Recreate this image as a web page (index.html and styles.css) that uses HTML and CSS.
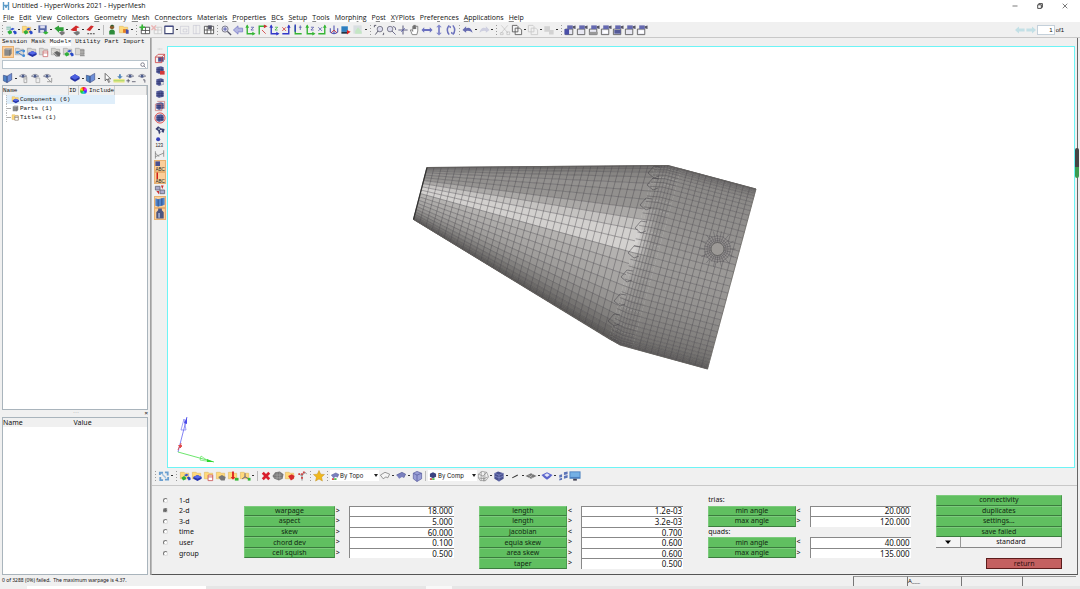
FILE: index.html
```html
<!DOCTYPE html>
<html lang="en">
<head>
<meta charset="utf-8">
<title>Untitled - HyperWorks 2021 - HyperMesh</title>
<link rel="stylesheet" href="styles.css">
</head>
<body>
<div class="app">
  <header class="titlebar">
    <svg class="logo" viewBox="0 0 8 8" aria-hidden="true"><path d="M1.5 0v8M6.5 0v8M1.5 3.5h5M3 5h2" stroke="#5b9bc8" stroke-width="1.4" fill="none"/></svg>
    <h1>Untitled - HyperWorks 2021 - HyperMesh</h1>
    <div class="winctl">
      <button aria-label="Minimize"><svg viewBox="0 0 6 6"><path d="M.5 3h5" stroke="#444" stroke-width=".7"/></svg></button>
      <button aria-label="Restore"><svg viewBox="0 0 6 6"><path d="M.7 1.8h3.6v3.6H.7zM1.8 1.6V.6h3.6v3.7h-1" stroke="#222" stroke-width=".8" fill="none"/></svg></button>
      <button aria-label="Close"><svg viewBox="0 0 6 6"><path d="M.7.7l4.6 4.6M5.3.7L.7 5.3" stroke="#444" stroke-width=".7"/></svg></button>
    </div>
  </header>
  <nav class="menubar">
    <a href="#"><u>F</u>ile</a><a href="#"><u>E</u>dit</a><a href="#"><u>V</u>iew</a><a href="#"><u>C</u>ollectors</a><a href="#"><u>G</u>eometry</a><a href="#"><u>M</u>esh</a><a href="#">Co<u>n</u>nectors</a><a href="#">Materia<u>l</u>s</a><a href="#"><u>P</u>roperties</a><a href="#"><u>B</u>Cs</a><a href="#"><u>S</u>etup</a><a href="#"><u>T</u>ools</a><a href="#">Morph<u>i</u>ng</a><a href="#">P<u>o</u>st</a><a href="#"><u>X</u>YPlots</a><a href="#">Prefe<u>r</u>ences</a><a href="#"><u>A</u>pplications</a><a href="#"><u>H</u>elp</a>
  </nav>
  <div class="toolbar">
    <div class="tools" data-tools="| new v open v save v import v export v run v ; user folderblock v | addpage delpage window v pageoff pageoff2 pagegrid | zoomin left axg axr axb axb2 axb3 axg axg2 iso photo photo2 v | fitmag rotmag cross hand arrh arrv rot | undo v redo v | cut copy v paste v paste2 v | pg1 pg2 pg3 pg4 pg5 pg2 pg4"></div>
    <div class="pager">
      <button aria-label="Previous page"><svg viewBox="0 0 10 8"><path d="M0 4l4-3.6v2h5.6v3.2H4v2z" fill="#c3e0e6"/></svg></button>
      <button aria-label="Next page"><svg viewBox="0 0 10 8"><path d="M10 4L6 .4v2H.4v3.2H6v2z" fill="#c3e0e6"/></svg></button>
      <input id="page" value="1"><label for="page">of1</label>
    </div>
  </div>
  <main class="main">
    <aside class="side">
      <nav class="tabs"><a href="#">Session</a><a href="#">Mask</a><a href="#" class="on">Model<span>×</span></a><a href="#">Utility</a><a href="#">Part</a><a href="#">Import</a></nav>
      <div class="tools" data-tools="cube! fshare fcomp fprop fmat fmulti ffile"></div>
      <div class="search"><input aria-label="Search"><svg viewBox="0 0 6 6" aria-hidden="true"><circle cx="2.6" cy="2.6" r="1.8"/><path d="M4 4l1.6 1.6"/></svg></div>
      <div class="row">
        <div class="tools" data-tools="panel v eye1 eye2 eye3"></div>
        <div class="tools" data-tools="comp v panel v cursor addmesh eyepm eye4"></div>
      </div>
      <div class="tree">
        <div class="treehead"><span>Name</span><span>ID</span><span class="wheel"></span><span>Include</span><span></span></div>
        <ul>
          <li class="sel"><i data-icon="fcompy"></i>Components&nbsp;(6)</li>
          <li><i data-icon="cube"></i>Parts&nbsp;(1)</li>
          <li><i data-icon="fprop2"></i>Titles&nbsp;(1)</li>
        </ul>
      </div>
      <div class="splitter"><span>···</span><b>×</b></div>
      <div class="props"><table><thead><tr><th>Name</th><th>Value</th></tr></thead></table></div>
    </aside>
    <section class="work">
      <div class="stage">
        <div class="vtools" data-tools="vh vb1 vb2 vb3 vb4 vb5 vb6 vb7 v123 vb8 abc1! abc2! abc3 vb9! vb10!"></div>
        <div class="view"><svg id="model" viewBox="168 47 906 420" preserveAspectRatio="xMidYMid meet" role="img" aria-label="Meshed cone model"></svg></div>
        <div class="marker"></div>
      </div>
      <div class="toolbar lower">
        <div class="tools" data-tools="| cycle v | ymulti ycomp yprop ymat yload ysys v ; redx blob yred fork | star |"></div>
        <div class="combo"><i data-icon="topo"></i><select aria-label="Geometry colour"><option>By Topo</option></select></div>
        <div class="tools" data-tools="shape v shape2 v bcube ;"></div>
        <div class="combo"><i data-icon="compc"></i><select aria-label="Element colour"><option>By Comp</option></select></div>
        <div class="tools" data-tools="wire v solid v line v diam v comp2 v shards screen"></div>
      </div>
      <form class="panel">
        <div class="modes">
          <label><input type="radio" name="m">1-d</label><label><input type="radio" name="m" checked>2-d</label><label><input type="radio" name="m">3-d</label><label><input type="radio" name="m">time</label><label><input type="radio" name="m">user</label><label><input type="radio" name="m">group</label>
        </div>
        <div class="checks">
          <p></p><p></p><p></p>
          <button type="button">warpage</button><span>&gt;</span><input aria-label="warpage" value="18.000">
          <button type="button">aspect</button><span>&gt;</span><input aria-label="aspect" value="5.000">
          <button type="button">skew</button><span>&gt;</span><input aria-label="skew" value="60.000">
          <button type="button">chord dev</button><span>&gt;</span><input aria-label="chord dev" value="0.100">
          <button type="button">cell squish</button><span>&gt;</span><input aria-label="cell squish" value="0.500">
        </div>
        <div class="checks">
          <p></p><p></p><p></p>
          <button type="button">length</button><span>&lt;</span><input aria-label="minimum length" value="1.2e-03">
          <button type="button">length</button><span>&gt;</span><input aria-label="maximum length" value="3.2e-03">
          <button type="button">jacobian</button><span>&lt;</span><input aria-label="jacobian" value="0.700">
          <button type="button">equia skew</button><span>&gt;</span><input aria-label="equia skew" value="0.600">
          <button type="button">area skew</button><span>&gt;</span><input aria-label="area skew" value="0.600">
          <button type="button">taper</button><span>&gt;</span><input aria-label="taper" value="0.500">
        </div>
        <div class="checks">
          <p>trias:</p><p></p><p></p>
          <button type="button">min angle</button><span>&lt;</span><input aria-label="tria min angle" value="20.000">
          <button type="button">max angle</button><span>&gt;</span><input aria-label="tria max angle" value="120.000">
          <p>quads:</p><p></p><p></p>
          <button type="button">min angle</button><span>&lt;</span><input aria-label="quad min angle" value="40.000">
          <button type="button">max angle</button><span>&gt;</span><input aria-label="quad max angle" value="135.000">
        </div>
        <div class="actions">
          <button type="button">connectivity</button><button type="button">duplicates</button><button type="button">settings...</button><button type="button">save failed</button>
          <div class="standard"><button type="button" aria-label="Choose"><svg viewBox="0 0 6 4"><path d="M0 .5h6L3 4z"/></svg></button><button type="button">standard</button></div>
          <button type="button" class="return">return</button>
        </div>
      </form>
    </section>
  </main>
  <footer class="status"><span class="msg">0 of 3288 (0%) failed.&nbsp; The maximum warpage is 4.37.</span><span class="f1"></span><span class="f1">A___</span><span class="f2"></span><span class="f1"></span></footer>
  <div class="strip"></div>
</div>
<script src="app.js"></script>
</body>
</html>
```
FILE: styles.css
```css
* { box-sizing: border-box; }
body { margin: 0; background: #fff; color: #111; font: 7px/10px "Noto Sans", "Open Sans", sans-serif; }
button, input, select { font: inherit; color: inherit; margin: 0; padding: 0; border: 0; background: none; border-radius: 0; min-width: 0; }
a { color: inherit; text-decoration: none; }
p { margin: 0; }
svg { display: block; }
.app { min-height: 100vh; display: flex; flex-direction: column; }

.titlebar { display: flex; align-items: center; height: 12px; padding: 0 11px 0 2px; }
.logo { width: 8px; height: 8px; margin-right: 2px; }
.titlebar h1 { margin: 0; font: 400 7px/10px "Open Sans", sans-serif; flex: 1; }
.winctl { display: flex; gap: 18px; }
.winctl svg { width: 6px; height: 6px; }
.winctl button { width: 7px; }
.menubar { display: flex; gap: 5px; height: 10px; padding-left: 3px; font-family: "Open Sans", sans-serif; line-height: 11px; }
.menubar u { text-underline-offset: 1px; text-decoration-thickness: 1px; text-decoration-color: #888; }

.toolbar { display: flex; align-items: center; height: 16px; background: #f0f0f0; border-bottom: 1px solid #c8c8c8; }
.tools { display: flex; align-items: center; }
.tb { width: 12px; height: 12px; flex: none; }
.tb svg, [data-icon] svg { width: 100%; height: 100%; }
.tb.on { background: #fbcf9a; box-shadow: inset 0 0 0 1px #e8b070; }
.drop { width: 4px; height: 2px; flex: none; background: linear-gradient(#333, #333) center / 2px 1px no-repeat; }
.handle { width: 5px; height: 10px; flex: none; background: repeating-linear-gradient(#999 0 1px, #f0f0f0 1px 3px) center / 1px 10px no-repeat; }
.sep { width: 5px; height: 10px; flex: none; background: linear-gradient(#bbb, #bbb) center / 1px 10px no-repeat; }
.pager { display: flex; align-items: center; gap: 1px; margin-left: auto; padding-right: 16px; font: 6px/8px "Liberation Sans", sans-serif; }
.pager button, .pager svg { width: 10px; height: 8px; }
.pager input { width: 18px; height: 10px; background: #fff; border: 1px solid #c4d0da; text-align: right; padding-right: 1px; }

.main { flex: 1; display: flex; background: #f0f0f0; min-height: 0; }
.side { width: 151px; flex: none; display: flex; flex-direction: column; padding-left: 2px; border-right: 1px solid #a0a0a0; background: #f0f0f0; }
.tabs { display: flex; gap: 4px; height: 8px; font: 6px/8px "Liberation Mono", monospace; }
.tabs .on { background: #fff; }
.search { display: flex; align-items: center; height: 9px; margin: 2px 2px 0 0; background: #fff; border: 1px solid #b8c4cc; }
.search input { flex: 1; height: 7px; }
.search svg { width: 6px; height: 6px; margin-right: 1px; fill: none; stroke: #556; stroke-width: .7; }
.side > .tools { height: 12px; }
.row { display: flex; justify-content: space-between; height: 14px; margin: 2px 1px 0 0; }
.tree { flex: 1; background: #fff; border: 1px solid #a9b4bc; margin-right: 2px; font: 6px/9px "Liberation Mono", monospace; color: #111; }
.treehead { display: grid; grid-template-columns: 66px 10px 10px 26px 1fr; height: 9px; background: #f0f0f0; }
.treehead span { border-right: 1px solid #ccc; }
.treehead .wheel { width: 7px; height: 7px; margin: 1px; border: 0; border-radius: 50%; background: conic-gradient(#e22, #e2e, #33f, #2cc, #2c2, #fd0, #e22); }
.tree ul { list-style: none; margin: 0 0 0 3px; padding: 0; }
.tree li { display: flex; align-items: center; width: 109px; height: 9px; padding-left: 4px; background: linear-gradient(#aaa, #aaa) 0 4px / 4px 1px no-repeat; border-left: 1px dotted #bbb; }
.tree li.sel { background: #dfeefa; }
.tree i { width: 9px; height: 9px; flex: none; }
.splitter { display: flex; justify-content: center; height: 7px; position: relative; font: 6px/5px "Liberation Sans", sans-serif; color: #888; }
.splitter b { position: absolute; right: 2px; top: 1px; color: #444; }
.props { height: 158px; background: #fff; border: 1px solid #a9b4bc; margin-right: 2px; }
.props table { width: 100%; border-collapse: collapse; background: #f0f0f0; }
.props th { padding: 0; text-align: left; font-weight: 400; line-height: 9px; }
.props th:first-child { width: 49%; }

.work { flex: 1; display: flex; flex-direction: column; min-width: 0; border-left: 1px solid #bbb; border-right: 1px solid #666; margin-right: 2px; border-bottom: 1px solid #555; }
.stage { flex: 1; display: flex; position: relative; padding: 8px 2px 0 0; min-height: 0; }
.vtools { width: 15px; display: flex; flex-direction: column; align-items: center; flex: none; }
.vtools .tb { height: 12px; }
.vtools .tb:first-child { height: 6px; }
.view { flex: 1; background: #fff; border: 1px solid #6df4f6; min-width: 0; }
.view svg { width: 100%; height: 100%; }
.marker { position: absolute; right: -2px; top: 110px; width: 4px; height: 30px; border-radius: 2px; background: linear-gradient(#444 65%, #3c9a50 65%); }
.lower { height: 18px; padding: 0 0 2px 1px; }
.combo { display: flex; align-items: center; position: relative; height: 11px; background: #fff; }
.combo i { width: 10px; height: 10px; }
.combo select { width: 39px; height: 10px; appearance: none; font: 6px/9px Inter, sans-serif; }
.combo::after { content: ""; position: absolute; right: 1px; top: 4px; border: 2px solid transparent; border-top: 3px solid #222; border-bottom: 0; }

.panel { display: grid; grid-template-columns: 56fr 209fr 204fr 202fr 126fr; column-gap: 25px; padding: 9px 15px 5px 11px; line-height: 9px; }
.modes, .actions, .checks { display: grid; height: 74px; grid-template-rows: repeat(7, minmax(0, 1fr)); }
.modes label { display: flex; align-items: center; gap: 11px; }
.modes input { appearance: none; width: 5px; height: 5px; border-radius: 50%; border: 1px solid #ddd; border-top-color: #777; border-left-color: #777; background: #fff; }
.modes input:checked { background: #666; }
.checks { grid-template-columns: 90fr 14px 104fr; }
.checks button, .actions > button { background: #60bf60; border: 1px solid #4a9a4e; border-top-color: #7ccb7c; border-left-color: #7ccb7c; border-bottom-color: #3b7c3e; color: #122812; line-height: 8px; }
.checks span { line-height: 9px; padding-left: 1px; }
.checks p { line-height: 10px; }
.checks input { width: 100%; height: 100%; background: #fff; border-top: 1px solid #888; border-left: 1px solid #888; padding: 0 1px 1px 0; text-align: right; font-size: 8px; line-height: 8px; }
.standard { display: grid; grid-template-columns: 1fr 4fr; }
.standard button { background: #f4f4f4; border-right: 1px solid #999; border-bottom: 1px solid #888; line-height: 8px; }
.standard svg { width: 6px; height: 4px; margin: auto; }
.actions .return { grid-row: 7; justify-self: end; width: 60%; background: #c46060; border: 1px solid #5c1c1c; color: #301010; }

.status { display: flex; height: 11px; background: #f0f0f0; padding: 0 4px 0 2px; font: 5px/10px "Noto Sans", sans-serif; }
.msg { flex: 1; }
.f1, .f2 { width: 54px; margin-top: 1px; font-size: 6px; line-height: 8px; border-left: 1px solid #777; border-top: 1px solid #999; }
.f2 { width: 61px; }
.strip { height: 3px; background: linear-gradient(90deg, #f0f0f0 27px, #fff 27px 206px, #e6e6e6 206px 426px, #f8f8f8 426px 452px, #e6e6e6 452px); }
```
FILE: app.js
```js
const B = '#4a4fa8', G = '#35b535';
const p = (d, s, w = 1, f = 'none') => `<path d="${d}" stroke="${s}" stroke-width="${w}" fill="${f}"/>`;
const f = (d, c) => `<path d="${d}" fill="${c}"/>`;
const folder = (c, e) => f('M1 2h4l1 1h4v6H1z', c) + p('M1 2h4l1 1h4v6H1z', e, .6);
const gray = folder('#d8d6d2', '#999'), yel = folder('#ffd97a', '#dcb45a');
const comp = f('M2 7l4.5-2L11 7v2l-4.500 2.500L2 9z', '#2433a8') + f('M2 7l4.500-2L11 7 6.500 9z', '#5468e8');
const multi = f('M5 5l3-1.500L10 5 7 6.500z', '#3856d0') + f('M2 8l3-2 2 1.500v2L4 11z', '#2fae3a') + f('M8 7.500l2-1 2 1.500v2l-2 1z', '#2648c8');
const axis = (c, c2) => p('M3 1v9h7', c, 1.5) + f('M1 3.500L3 0l2 3.500zM8.500 8l3.500 2-3.500 2z', c) + p('M7 3h3l-3 3h3', c2, .8);
const axisR = (c, c2) => p('M9 1v9H2', c, 1.5) + f('M7 3.500L9 0l2 3.500z', c) + p('M2 3l4 4M6 3L2 7', c2, .8);
const block = f('M2 3l5-1 3 1v6l-5 1-3-1z', '#555d9c') + p('M2 5.500h8M2 7.500h8M5 3v7M8 3v6', '#252b63', .5);
const eye = p('M1 4q4-4 8 0-4 3-8 0z', '#778', .8, '#d9e0ee') + '<circle cx="5" cy="4" r="1.500" fill="#4c5c8c"/>';
const page = p('M1 5h8v6H1z', '#555', .9, '#e8e8f2') + f('M3 1h6v4H3z', '#6468b0') + f('M9 2l3-1v4L9 4z', '#556');
const ghost = s => `<g opacity=".25">${s}</g>`;
const text = (t, y, c = '#222') => `<text x="1" y="${y}" font-size="5" font-family="Liberation Sans" fill="${c}">${t}</text>`;
const copy = p('M1 1h5l1 1v6H1zM4 4h5l2 2v5H4z', '#555', .9, '#f4f4f4');
const barrow = f('M1 5l6-3 4 2-2 4-2-1-3 2z', '#7a80be') + p('M1 5l6-3 4 2-2 4', '#444b88', .6);

const icons = {
  new: f('M1 1h5v8H1z', '#e9edf5') + p('M1 3h5M1 5h5', '#5a8', .8) + multi, open: yel + multi,
  save: f('M1 1h9v8H1z', '#5868a8') + f('M3 1h5v3H3zM3 6h4v3H3z', '#dde') + f('M6 9l3-2 3 2-3 2z', G),
  import: f('M1 4l5-3v2h5v4H6v2z', '#2f9f38') + f('M6 9l3-2 3 1v2l-3 2z', '#777'),
  export: f('M1 6l6-5 4 2-3 1v3H4z', '#d02a2a') + f('M4 9l4-2 3 1v2l-3 2z', '#777'),
  run: f('M1 6l5-5 3 1-4 5z', '#d02a2a') + p('M2 10h2M5 10h2M8 10h2', '#444', 1.2),
  user: '<circle cx="6" cy="3" r="2.300" fill="#8a5a2b"/>' + f('M3 7q3-3 6 0v4H3z', '#2d8a3a') + f('M4 2l2-2 3 2z', '#2c5b32'),
  folderblock: yel + f('M5 5h3v4H5z', '#e77b22') + f('M8 5l3 1v4H8z', B),
  addpage: p('M2 3h9v7H2zM2 6.500h9M6.500 3v7', '#444', .9, '#fff') + p('M0 3h6M3 0v6', G, 1.8),
  delpage: ghost(p('M3 3h8v7H3zM3 6h8M7 3v7', '#555', .9, '#fff') + p('M0 1l5 5M5 1L0 6', '#d00', 1.500)),
  window: p('M1.500 2h9v8h-9z', '#444b76', 1.300, '#fff') + p('M1.500 2h9', '#444b86', 1.500),
  pageoff: ghost(p('M1 2h9v8H1zM4 5h4v3H4z', '#779', .9)), pageoff2: ghost(p('M2 1h7v9H2zM5 1v9', '#779', .9)),
  pagegrid: p('M1 2h10v8H1zM1 6h10M4 2v8M8 2v8', '#444', .9, '#fff') + f('M5 1h4v4H5z', '#556'),
  zoomin: '<circle cx="5" cy="5" r="3.300" stroke="#778" fill="#dde"/>' + p('M7.500 7.500l4 4', '#556', 1.500) + p('M3 5h4M5 3v4', B, .9),
  left: p('M1 6l5-4.500V4h5v4H6v2.500z', '#7478c4', .8, '#b4b6e2'),
  axg: axis(G, B), axg2: axisR(G, B), axr: p('M3 11V2h7', G, 1.5) + p('M6 6l4 4', '#c22', .8) + f('M8 0l4 2-4 2z', '#c33'), axb: axis('#3339c8', G), axb2: axisR('#3339c8', '#c22'), axb3: p('M3 1v9h7', G, 1.500) + p('M3 0v8', '#3339c8', 1.500) + p('M7 3h3M8.500 1v5', B, .8),
  iso: p('M6 1v9M2 4v4q4 4 8 0V4', '#5558b4', 1.200) + p('M3 9l3-3 3 3', '#c22', .8),
  photo: f('M1 2h7v6H1z', '#2d7fc0') + f('M1 8h7v2H1z', '#234') + f('M7 6l4 2-4 3z', '#d22'),
  photo2: ghost(f('M1 1h9v9H1z', '#9ab') + f('M3 7l3-4 4 5v2H3z', '#4c4')),
  fitmag: '<circle cx="7" cy="5" r="3" stroke="#778" fill="#dde"/>' + p('M5 7l-3 4M1 1h2M1 1v2M10 11h1V9', '#556', 1),
  rotmag: '<circle cx="5" cy="5" r="3" stroke="#778" fill="#dde"/>' + p('M7 7l4 4M8 2q4 1 3 4', '#668', 1),
  cross: p('M6 1v10M1 6h10', '#668', 1.2) + p('M4 8l4-4', B, .8),
  hand: p('M3 11L1 6l1-.5 1.500 2V2h1v3-4h1v4-4h1.200v4-3H9v5l-1 4z', '#666', .8, '#fff'),
  arrh: f('M0 6l3-3v2h6V3l3 3-3 3V7H3v2z', '#6a70c0'), arrv: f('M6 0l3 3H7v6h2l-3 3-3-3h2V3H3z', '#8388cc'),
  rot: p('M4 1q-4 5 0 10M8 1q4 5 0 10', '#6a70bc', 1.600) + f('M2 2h4v2zM10 10H6V8z', '#6a70bc'),
  undo: f('M0 6l4-4v2q5-2 7 5-3-3-7-2v2z', '#666bb0'), redo: ghost(f('M12 6L8 2v2Q3 2 1 9q3-3 7-2v2z', '#666bb0')),
  cut: ghost(p('M2 1l7 8M9 1L2 9M1 9h3v2H1zM8 8h3v3H8z', '#666', 1)), copy, paste: ghost(copy), paste2: ghost(f('M1 2h6v6H1zM6 6h5v5H6z', '#777')),
  pg1: page + f('M0 5h5v6H0z', B), pg2: page, pg3: page + f('M1 8h9v3H1z', '#999'), pg4: page + p('M3 8h5', '#fff', 3), pg5: page + f('M2 6h7v4H2z', '#555a98'),
  cube: f('M2 3l2-1h6v6l-2 2H2z', '#8a8a8a') + f('M2 3l2-1h6l-2 1.500z', '#bbb') + p('M8 3.500V10', '#555', .6),
  fshare: gray + p('M3 6l6-2M3 6l6 4', '#3f7cc8', 1) + '<circle cx="3" cy="6.500" r="1.500" fill="#3f8cd8"/><circle cx="10" cy="5" r="1.500" fill="#3f8cd8"/><circle cx="10" cy="10" r="1.500" fill="#3f8cd8"/>',
  fcomp: gray + comp, fprop: gray + p('M5 5h5v6H5zM5 7h5', '#c66', .8, '#fff'), fmat: gray + f('M3 7l4-2 4 2-1 4-4 0z', '#666') + p('M2 5l5 5', '#eee', .8),
  fmulti: gray + multi, ffile: gray + p('M6 4h5M6 6h5M6 8h5M6 10h5', '#777', 1), fcompy: yel + comp, fprop2: yel + p('M5 4h5v6H5zM5 6h5', '#765', .8, '#fff'),
  panel: f('M1 3l4 1v7L1 9z', '#4d82c4') + f('M5 4l5-3v7l-5 3z', '#6d8fd8') + p('M1 3l4 1v7L1 9zM5 4l5-3v7l-5 3z', '#3a4a84', .7),
  eye1: eye + p('M6 5h3v6H6zM7 7h2', '#999', .8, '#eee'), eye2: eye + p('M6 6h4v5H6z', '#aaa', .8, '#eee'), eye3: eye + p('M5 6l5 5M5 10h5V6', '#999', 1),
  eyepm: eye + p('M1 9h4M3 7v4M7 10h4', '#556', .9), eye4: eye + p('M6 8h2v3', '#556', .9),
  comp: f('M1 5l5-3 5 3v2l-5 3-5-3z', '#2430a0') + f('M1 5l5-3 5 3-5 3z', '#4c60e0'),
  cursor: p('M4 1v8l2-2 2 4 1-1-2-3h3z', '#444', .8, '#fff'),
  addmesh: f('M0 7h12v4H0z', '#ece88a') + p('M0 9h12', '#8bcf5c', .8) + f('M6 2h2v2h2L7 7 4 4h2z', '#58b'),
  vh: p('M1 6h2M4 6h2M7 6h2M10 6h1', '#999', 1),
  vb1: f('M4 5h6v5H4z', '#4a5090') + p('M1 5h7v6H1zM4 2h7v6M1 5l3-3M8 5l3-3', '#c44', .9), vb2: block + f('M6 7h5v4H6z', '#d23a3a'), vb3: block + f('M7 6h3v3H7z', '#ddd'), vb4: block,
  vb5: block + p('M1 4h7v7H1zM3 1h8v8', '#c77', .8), vb6: block + '<circle cx="6" cy="6" r="5.500" stroke="#d44" fill="none"/>',
  vb7: f('M1 5l3-3 3 2 4 1-1 4-3-1-2 3-1-4z', '#3b4274') + f('M4 4h2v2H4z', '#9ab') + f('M6 6h2v2H6z', '#dde'),
  v123: '<circle cx="4" cy="3" r="2.200" fill="#3540b8"/>' + text('123', 11),
  vb8: p('M1 3v8M1 9l9-4M1 5l4 4M10 2v7', '#777', .8), abc1: f('M1 1h5v5H1z', '#4a5090') + text('ABC', 11), abc2: p('M3 0v7', '#c11', 1.500) + text('ABC', 11),
  abc3: p('M1 2h5v4H1zM6 6h5v4H6z', '#667', .9, '#aac') + f('M7 1h3L8.500 5zM2 7h3v4z', '#c33'),
  vb9: f('M1 2l3 1 4-1 3-1v8l-3 1-4 1-3-1z', '#4f84cc') + p('M4 3v8M8 2v8', '#1e3668', .7), vb10: f('M4 0h4v2l2 2v7H2V4l2-2z', '#4d5680') + f('M4 5h2v5H4z', '#9aa4c8'),
  cycle: p('M1.500 5V2.500H5M7 2h3v3.500M10.500 7v3H7M5 10.500H2V7', '#6a9fd0', 2) + p('M4 4l4 4', '#9cc0e0', 1.500),
  ymulti: yel + multi, ycomp: yel + comp, yprop: yel + p('M5 5h5v6H5zM5 7h5', '#c55', .9, '#fff'), ymat: yel + f('M3 7l4-2 4 2-1 4H6z', '#777'),
  yload: yel + f('M5 1h2v6h1.500L6 10 3.500 7H5z', '#d22') + f('M8 8h4v3H8z', G), ysys: yel + p('M6 3v4l4 2M6 7l-3 2', '#557', 1) + f('M9 8h3v3H9z', G),
  redx: p('M2.500 2.500l7 7M9.500 2.500l-7 7', '#d81e2c', 3), blob: f('M0 6l3-4 5-1 4 3-1 5-4 2-5-2z', '#777') + p('M2 5h8M2 8h8M5 2v8M8 2v8', '#bbb', .5),
  yred: yel + f('M4 6l4-2 3 2-1 3-3 2z', '#d62a2a'), fork: p('M6 11V6L3 4M6 6l2-3q2-2 3 1', '#888', 1) + f('M2 3h2v2H2zM7 1h2v2H7zM5 7h2v2H5zM5 3h2v2H5z', '#c44'),
  star: f('M6 0l1.800 4 4.200.4-3.200 2.900.9 4.200L6 9.300l-3.700 2.200.9-4.200L0 4.400l4.200-.4z', '#f0b81c') + p('M6 0l1.800 4 4.200.4-3.200 2.900.9 4.200L6 9.300l-3.700 2.200.9-4.200L0 4.400l4.200-.4z', '#c08c18', .5),
  topo: barrow + f('M2 9h3v2H2z', '#c33') + f('M5 9h3v2H5z', G), shape: p('M1 5l5-3 5 2-2 4-2-1-3 2z', '#777', .8, '#f4f4f4'), shape2: barrow,
  bcube: f('M2 3l4-2 5 2v6l-5 3-4-3z', '#9a9fd6') + p('M2 3l4 2 5-2M6 5v7M2 3l4-2 5 2v6l-5 3-4-3z', '#4d5398', .7),
  compc: f('M2 3l4-2 4 2v4L6 9 2 7z', '#3b4280') + f('M2 9h3v2H2z', '#c33') + f('M5 9h3v2H5z', G),
  wire: p('M1 4l4-3 5 1 2 5-3 4-6 0-2-3zM1 4l5 2 4-4M6 6l1 6M1 8l6 1 4-2M4 1v10M8 2v9', '#777', .6), solid: f('M1 3l4-2 6 2v6l-5 3-5-3z', '#4a5290') + p('M1 3l5 2 5-2M6 5v7M1 6l5 2 5-2', '#8a92cf', .7),
  line: p('M3 8l6-3', '#333', 1.1), diam: f('M0 6l6-3 6 3-6 3z', '#777') + p('M3 5l5 3M8 4L4 8', '#ccc', .6), comp2: f('M0 5l6-3 6 3-3 3-3 2-3-2z', '#5b65cc') + f('M3 5l3-2 3 2-3 2z', '#e4e6fa'),
  shards: f('M2 5l3-1v3l-3 1zM7 2l4-1v3L7 5zM7 6l4-1v3L7 9zM2 9l3-1v2l-3 1z', '#5c74b8'), screen: f('M0 1h12v8H0z', '#4a80c0') + f('M1 2h10v5H1z', '#74b0e4') + f('M4 9h4v2H4z', '#445')
};
const svg = n => `<svg viewBox="-.5 -.5 13 13" aria-hidden="true">${icons[n]}</svg>`;

document.querySelectorAll('[data-tools]').forEach(el => {
  el.innerHTML = el.dataset.tools.trim().split(' ').map(t => {
    if (t === 'v') return '<span class="drop"></span>';
    if (t === '|') return '<span class="handle"></span>';
    if (t === ';') return '<span class="sep"></span>';
    const n = t.replace('!', '');
    return `<button type="button" class="tb${t.endsWith('!') ? ' on' : ''}" aria-label="${n}">${svg(n)}</button>`;
  }).join('');
});
document.querySelectorAll('[data-icon]').forEach(el => { el.innerHTML = svg(el.dataset.icon); });

// Cone and cylinder mesh: each section is a straight edge seen side on.
const mix = (a, b, t) => a + (b - a) * t;
const at = (s, t) => [mix(s[0][0], s[1][0], t), mix(s[0][1], s[1][1], t)];
const pt = a => a.map(v => v.toFixed(1)).join(' ');
const ring = (k, n) => (1 - Math.cos(Math.PI * k / n)) / 2;
const L = [[427, 167.5], [413.500, 219.500]], S0 = [[655, 165.500], [609, 339]], SM = [[668, 165.500], [620, 345]], S1 = [[681, 168.800], [632, 348.300]], R = [[756, 189], [707.500, 369]];
const ramp = (stops, t) => {
  let i = 1;
  while (i < stops.length - 1 && stops[i][0] < t) i++;
  const [a, x] = stops[i - 1], [b, y] = stops[i];
  return mix(x, y, (t - a) / (b - a));
};
const coneTone = [[0, 112], [.05, 134], [.12, 146], [.21, 144], [.25, 160], [.32, 184], [.36, 208], [.47, 210], [.51, 182], [.6, 172], [.7, 162], [.8, 147], [.88, 128], [.95, 106], [1, 84]];
const cylTone = [[0, 116], [.06, 138], [.2, 143], [.5, 155], [.7, 147], [.85, 131], [.94, 116], [1, 96]];
const rgb = v => `rgb(${Math.round(v + 1)},${Math.round(v - 1)},${Math.round(v - 3)})`;
const quad = (a, b, t0, t1, v) => `<path d="M${pt(at(a, t0))}L${pt(at(b, t0))}L${pt(at(b, t1))}L${pt(at(a, t1))}Z" fill="${rgb(v)}" stroke="${rgb(v)}" stroke-width=".4"/>`;
const between = (a, b, u) => [0, 1].map(i => [mix(a[i][0], b[i][0], u), mix(a[i][1], b[i][1], u)]);
let out = '', grid = '';
for (let k = 0; k < 24; k++) {
  const a = ring(k, 24), b = ring(k + 1, 24), m = (a + b) / 2;
  out += quad(L, S0, a, b, ramp(coneTone, m));
  for (let s = 0; s < 8; s++) {
    const lo = s < 4 ? between(S0, SM, s / 4) : between(SM, S1, (s - 4) / 4);
    const hi = s < 4 ? between(S0, SM, (s + 1) / 4) : between(SM, S1, (s - 3) / 4);
    out += quad(lo, hi, a, b, mix(ramp(coneTone, m), ramp(cylTone, m), Math.min(1, s / 5)));
    if (k === 0 && s > 1) grid += `M${pt(lo[0])}L${pt(lo[1])}`;
  }
  grid += `M${pt(at(L, a))}L${pt(at(S0, a))}`;
}
for (let k = 0; k < 40; k++) {
  const a = ring(k, 40), b = ring(k + 1, 40);
  out += quad(S1, R, a, b, ramp(cylTone, (a + b) / 2));
  grid += `M${pt(at(S0, a))}L${pt(at(SM, a))}L${pt(at(R, a))}`;
}
for (let i = 1; i < 32; i++) { const s = between(L, S0, i / 32); grid += `M${pt(s[0])}L${pt(s[1])}`; }
for (let i = 1; i < 12; i++) { const s = between(S1, R, i / 12); grid += `M${pt(s[0])}L${pt(s[1])}`; }
let zig = '';
[[648, 173], [647, 185], [640, 205], [635, 228], [628, 253], [621, 277], [614, 301], [608, 321]].forEach(([x, y]) => { zig += `M${x + 12} ${y - 6}L${x + 6} ${y - 7}L${x} ${y}L${x + 6} ${y + 5}L${x + 11} ${y + 3}`; });
let hole = '';
const cx = 717.500, cy = 249;
for (let i = 0; i < 28; i++) {
  const a = i / 28 * Math.PI * 2, r = i % 2 ? 14 : 18;
  hole += `M${pt([cx + 6.500 * Math.cos(a), cy + 6.500 * Math.sin(a)])}L${pt([cx + r * Math.cos(a), cy + r * Math.sin(a)])}`;
}
const axes = p('M178 452L187 417', '#6464f0', .8) + p('M184 419l-3 11h5z', '#6464f0', .6) + f('M187 417l-3 6 3 1z', '#4848e8') +
  p('M178 452L214 462', '#46e046', .8) + p('M201 456l-1 4 9 1.500z', '#46e046', .6) + f('M214 462l-7-3v3z', '#2ed62e') +
  p('M178 450l2-5 2 1-2 2 1-5', '#e03838', .8) + f('M178 445h4l-2 3z', '#e04848');
document.getElementById('model').innerHTML = out + p(grid, '#4a484e', .42) + p(zig, '#3e3c42', .5) +
  `<circle cx="${cx}" cy="${cy}" r="13" fill="#949190"/>` + p(hole, '#4a484e', .4) +
  [8.500, 10.500, 13].map(r => `<circle cx="${cx}" cy="${cy}" r="${r}" fill="none" stroke="#4a484e" stroke-width=".35"/>`).join('') +
  `<circle cx="${cx}" cy="${cy}" r="6.500" fill="#9c9996" stroke="#444" stroke-width=".6"/>` +
  p(`M${pt(L[0])}L${pt(SM[0])}L${pt(R[0])}L${pt(R[1])}L${pt(SM[1])}L${pt(L[1])}Z`, '#66635f', .7) + p(`M${pt(L[0])}L${pt(L[1])}`, '#333', 1.200) + axes;
```
